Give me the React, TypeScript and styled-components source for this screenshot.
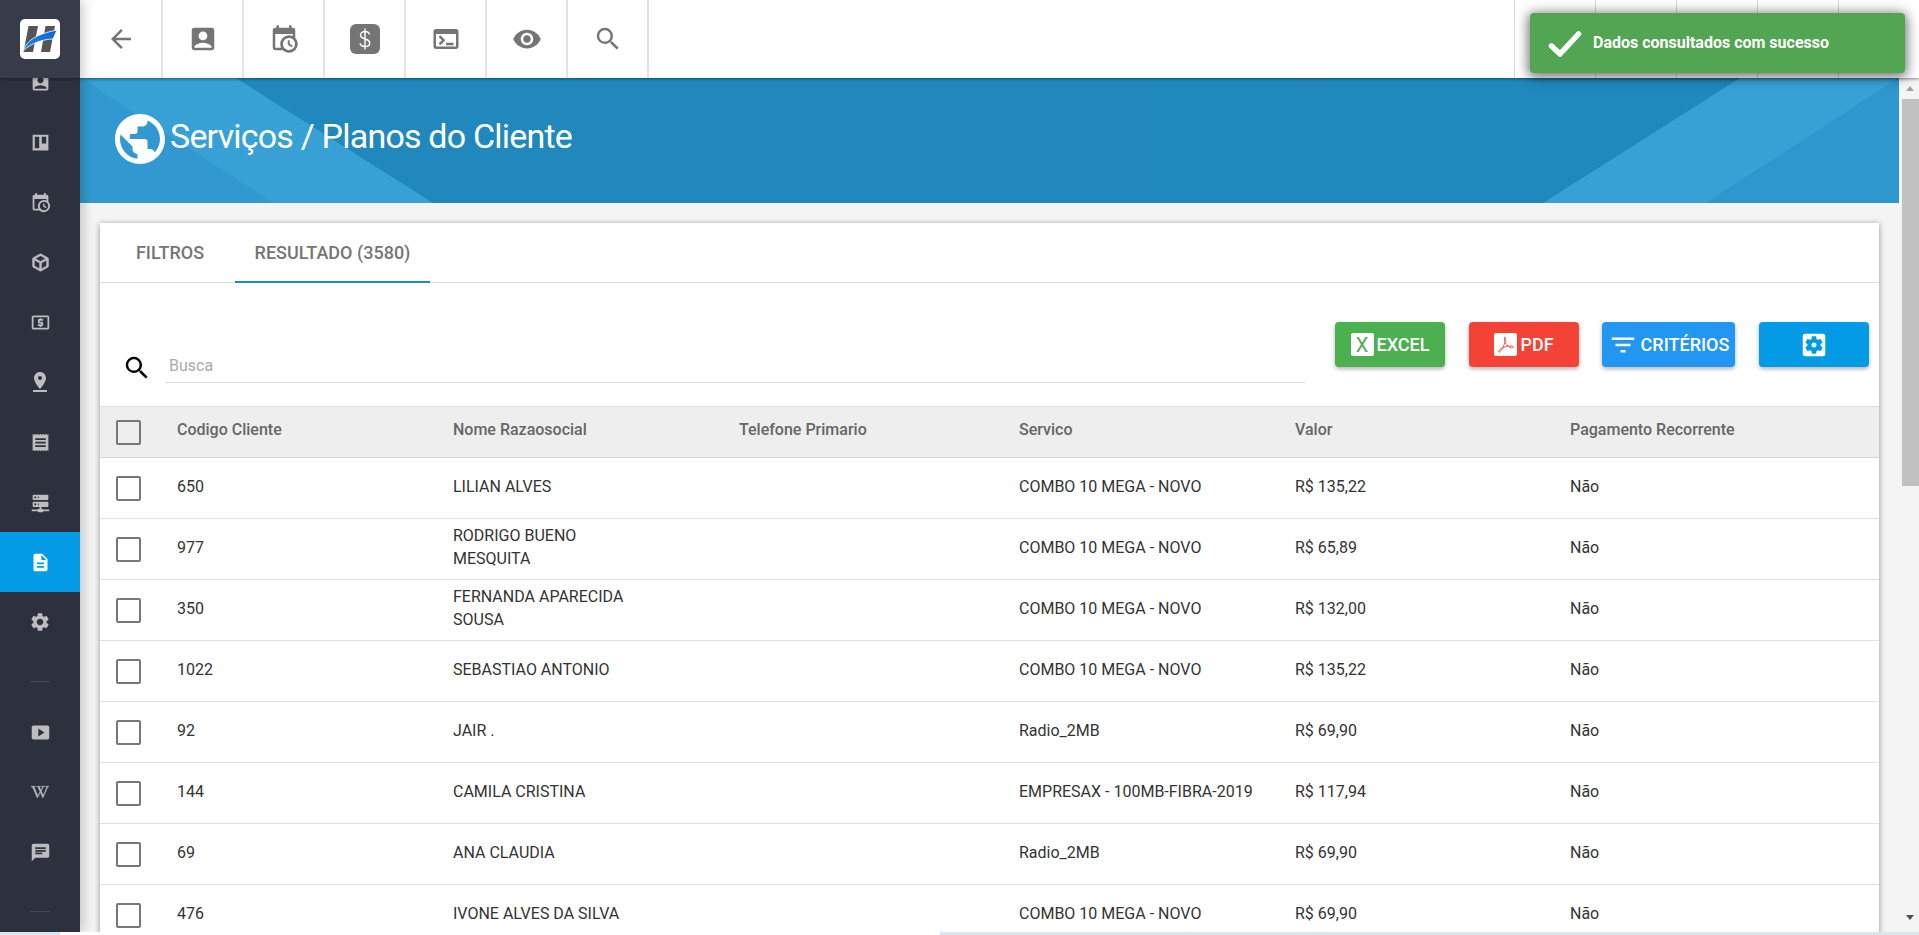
import React from "react";
import styled, { createGlobalStyle } from "styled-components";
import {
  MdAccountBox, MdArrowBack, MdChat, MdDescription, MdFilterList, MdLocalAtm,
  MdPinDrop, MdPublic, MdReceipt, MdSearch, MdSettings, MdSettingsApplications,
  MdSmartDisplay, MdTerminal, MdVisibility,
} from "react-icons/md";
import { FaWikipediaW } from "react-icons/fa";

const Global = createGlobalStyle`
  html, body { margin: 0; padding: 0; height: 100%; overflow: hidden; background: #fff; }
  * { box-sizing: border-box; }
  body { font-family: Roboto, "Liberation Sans", sans-serif; }
`;

const Page = styled.div`
  width: 1919px; height: 935px; display: flex; flex-direction: column; overflow: hidden; position: relative;
`;
const Shell = styled.div`display: flex; height: 932px; overflow: hidden;`;
const BottomStrip = styled.div`
  height: 3px;
  background: linear-gradient(90deg, #d7e7ee 0 60px, #fff 60px 940px, #d7e7ee 940px 100%);
`;

const Sidebar = styled.aside`
  width: 80px; flex: none; background: #2d303d; display: flex; flex-direction: column;
  position: relative; z-index: 3; box-shadow: 4px 0 10px rgba(0,0,0,.18); overflow: hidden;
`;
const LogoBar = styled.div`
  height: 78px; flex: none; background: #383b48; display: flex; align-items: center; justify-content: center;
  position: relative; z-index: 2; box-shadow: 0 1px 3px rgba(0,0,0,.3);
`;
const LogoTile = styled.div`
  width: 40px; height: 40px; background: #fff; border-radius: 5px; display: block; overflow: hidden;
  svg { display: block; }
`;
const Nav = styled.nav`margin-top: -26px; display: flex; flex-direction: column;`;
const NavItem = styled.div<{ $active?: boolean }>`
  height: 60px; flex: none; display: flex; align-items: center; justify-content: center;
  color: ${(p) => (p.$active ? "#fff" : "#bdbdc0")};
  background: ${(p) => (p.$active ? "#039be5" : "transparent")};
`;
const NavDivider = styled.div`
  width: 20px; height: 1px; background: #474a56; margin: 29px auto 20px; flex: none;
`;

const Column = styled.div`flex: 1; min-width: 0; display: flex; flex-direction: column;`;
const TopBar = styled.header`
  height: 78px; flex: none; background: #fff; display: flex; justify-content: space-between;
  position: relative; z-index: 2; box-shadow: 0 1px 3px rgba(0,0,0,.45);
`;
const ToolGroup = styled.div`display: flex;`;
const ToolButton = styled.div`
  width: 81px; height: 78px; display: flex; align-items: center; justify-content: center;
  color: #757575; border-right: 2px solid #e3e3e3;
  &:first-child { width: 83px; }
`;
const RightSlot = styled.div`
  width: 81px; height: 78px; border-left: 1px solid #d8d8d8;
`;

const Body = styled.div`flex: 1; min-height: 0; display: flex;`;
const Main = styled.main`flex: 1; min-width: 0; background: #f4f4f4; overflow: hidden;`;

const Banner = styled.section`
  height: 125px; position: relative; background: linear-gradient(90deg, #2088bd, #1f88bd); color: #fff;
  display: flex; align-items: center; padding: 0 0 4px 30px; overflow: hidden;
`;
const BannerArt = styled.svg`position: absolute; inset: 0; width: 100%; height: 100%;`;
const BannerIcon = styled.span`display: flex; position: relative;`;
const Title = styled.h1`
  margin: 0 0 5px 0; font-size: 34px; font-weight: 400; position: relative; line-height: 40px; letter-spacing: -0.8px;
`;

const Card = styled.section`
  margin: 20px 20px 0; background: #fff; box-shadow: 0 1px 6px rgba(0,0,0,.4);
`;
const Tabs = styled.div`display: flex; height: 60px; border-bottom: 1px solid #ddd;`;
const Tab = styled.div<{ $active?: boolean; $width: number; $inset?: number }>`
  width: ${(p) => p.$width}px; height: 60px; display: flex; align-items: center; justify-content: center;
  padding-left: ${(p) => p.$inset ?? 0}px;
  font-size: 18px; font-weight: 500; color: #757575; text-transform: uppercase; white-space: nowrap;
  border-bottom: 2px solid ${(p) => (p.$active ? "#1e88c8" : "transparent")};
`;

const Toolbar = styled.div`height: 123px; display: flex; padding: 0 10px 0 22px;`;
const SearchGroup = styled.div`
  flex: 1; display: flex; align-items: flex-end; height: 30px; margin: 70px 30px 0 0; gap: 13px;
  color: #000;
`;
const SearchInput = styled.input`
  flex: 1; height: 30px; border: 0; border-bottom: 1px solid #ddd; outline: 0; padding: 0 4px 4px;
  font: 400 16px Roboto, sans-serif; background: transparent;
  &::placeholder { color: #aaa; }
`;
const Actions = styled.div`display: flex; gap: 24px; margin-top: 39px; height: 45px;`;
const ActionButton = styled.div<{ $bg: string; $width: number }>`
  width: ${(p) => p.$width}px; height: 45px; background: ${(p) => p.$bg}; border-radius: 4px; color: #fff;
  display: flex; align-items: center; justify-content: center; gap: 3px;
  font-size: 18px; font-weight: 500; box-shadow: 0 2px 4px rgba(0,0,0,.3);
  &:nth-child(3) { margin-left: -1px; }
`;
const Badge = styled.span<{ $color: string }>`
  width: 23px; height: 23px; background: #fff; border-radius: 2px; color: ${(p) => p.$color};
  display: flex; align-items: center; justify-content: center; font-size: 20px; font-weight: 400;
`;

const gridCols = "77px 276px 286px 280px 276px 275px 1fr";
const HeadRow = styled.div`
  display: grid; grid-template-columns: ${gridCols}; align-items: center; height: 52px;
  background: #eee; border-top: 1px solid #ddd; border-bottom: 1px solid #d4d4d4;
  font-size: 16px; font-weight: 500; color: #666;
`;
const HeadCell = styled.div`padding-bottom: 6px;`;
const Row = styled.div`
  display: grid; grid-template-columns: ${gridCols}; align-items: center; height: 61px;
  border-bottom: 1px solid #e0e0e0; font-size: 16px; color: #333; line-height: 23px;
`;
const Cell = styled.div`padding-bottom: 4px;`;
const CheckCell = styled.div`display: flex; padding-left: 16px;`;
const Check = styled.span`
  width: 25px; height: 25px; border: 2px solid #777; border-radius: 2px; display: block;
`;
const NameCell = styled(Cell)`max-width: 185px;`;

const Scroller = styled.div`
  width: 20px; flex: none; background: #f4f4f4; display: flex; flex-direction: column; align-items: center;
  padding: 8px 0 8px 2px; position: relative;
`;
const ArrowUp = styled.span`
  width: 0; height: 0; border: 4.5px solid transparent; border-top: 0; border-bottom: 5px solid #a3a3a3; flex: none;
`;
const Thumb = styled.span`
  width: 17px; height: 387px; background: #c1c1c1; margin-top: 8px; flex: none;
`;
const ArrowDown = styled.span`
  width: 0; height: 0; border: 4.5px solid transparent; border-bottom: 0; border-top: 5px solid #505050;
  margin-top: auto; margin-bottom: 4px; flex: none;
`;

const Toast = styled.div`
  position: absolute; left: 1530px; top: 13px; width: 375px; height: 60px; background: #52a552; color: #fff;
  border-radius: 4px; display: flex; align-items: center; gap: 11px; padding: 0 0 2px 18px; z-index: 10;
  font-size: 16px; font-weight: 700; box-shadow: 0 2px 12px 2px rgba(0,0,0,.55);
`;
const ToastMark = styled.span`display: flex; margin-top: 4px;`;

const CalendarClock = ({ size }: { size: number }) => (
  <svg width={size} height={size} viewBox="0 0 24 24" fill="currentColor">
    <path d="M15,13H16.5V15.82L18.94,17.23L18.19,18.53L15,16.69V13M19,8H5V19H9.67C9.24,18.09 9,17.07 9,16A7,7 0 0,1 16,9C17.07,9 18.09,9.24 19,9.67V8M5,21C3.89,21 3,20.1 3,19V5C3,3.89 3.89,3 5,3H6V1H8V3H16V1H18V3H19A2,2 0 0,1 21,5V11.1C22.24,12.36 23,14.09 23,16A7,7 0 0,1 16,23C14.09,23 12.36,22.24 11.1,21H5M16,11.15A4.85,4.85 0 0,0 11.15,16C11.15,18.68 13.32,20.85 16,20.85A4.85,4.85 0 0,0 20.85,16C20.85,13.32 18.68,11.15 16,11.15Z" />
  </svg>
);
const Trello = ({ size }: { size: number }) => (
  <svg width={size} height={size} viewBox="0 0 24 24" fill="currentColor">
    <path fillRule="evenodd" d="M3 3H21V21H3ZM5.500 5.500V18.500H10.500V5.500ZM13.500 5.500V13H18.500V5.500Z" />
  </svg>
);
const Cube = ({ size }: { size: number }) => (
  <svg width={size} height={size} viewBox="0 0 24 24" fill="currentColor" stroke="currentColor" strokeWidth=".7">
    <path d="M21,16.5C21,16.88 20.79,17.21 20.47,17.38L12.57,21.82C12.41,21.94 12.21,22 12,22C11.79,22 11.59,21.94 11.43,21.82L3.53,17.38C3.21,17.21 3,16.88 3,16.5V7.5C3,7.12 3.21,6.79 3.53,6.62L11.43,2.18C11.59,2.06 11.79,2 12,2C12.21,2 12.41,2.06 12.57,2.18L20.47,6.62C20.79,6.79 21,7.12 21,7.5V16.5M12,4.15L6.04,7.5L12,10.85L17.96,7.5L12,4.15M5,15.91L11,19.29V12.58L5,9.21V15.91M19,15.91V9.21L13,12.58V19.29L19,15.91Z" />
  </svg>
);
const ServerNet = ({ size }: { size: number }) => (
  <svg width={size} height={size} viewBox="0 0 24 24" fill="currentColor">
    <path d="M13,19H14A1,1 0 0,1 15,20H22V22H15A1,1 0 0,1 14,23H10A1,1 0 0,1 9,22H2V20H9A1,1 0 0,1 10,19H11V17H4A1,1 0 0,1 3,16V12A1,1 0 0,1 4,11H20A1,1 0 0,1 21,12V16A1,1 0 0,1 20,17H13V19M4,3H20A1,1 0 0,1 21,4V8A1,1 0 0,1 20,9H4A1,1 0 0,1 3,8V4A1,1 0 0,1 4,3M9,7H10V5H9V7M9,15H10V13H9V15M5,5V7H7V5H5M5,13V15H7V13H5Z" />
  </svg>
);
const DollarTile = () => (
  <svg width="30" height="30" viewBox="0 0 30 30">
    <rect width="30" height="30" rx="6" fill="#757575" />
    <path d="M19.500 10.500c-.4-2-2.200-3-4.500-3-2.600 0-4.500 1.400-4.500 3.600 0 2.400 2 3.200 4.500 3.900 2.600.7 4.700 1.500 4.700 4 0 2.300-2 3.600-4.700 3.600-2.600 0-4.600-1.200-4.900-3.400M15 4.500v21" fill="none" stroke="#fff" strokeWidth="1.4" />
  </svg>
);
const Logo = () => (
  <svg width="40" height="40" viewBox="0 0 40 40">
    <defs>
      <linearGradient id="sw" x1="0" y1="1" x2="1" y2="0">
        <stop offset="0" stopColor="#1f8be0" />
        <stop offset="1" stopColor="#0a62e0" />
      </linearGradient>
    </defs>
    <path d="M8.500 7H18L13 33H3.500Z M25.500 7H35L30 33H21Z" fill="#555" />
    <path d="M3 32C7 21 17 15 37 11C35 15 34 18 33 20C24 20 11 24 3 32Z" fill="url(#sw)" stroke="#fff" strokeWidth=".8" />
  </svg>
);
const PdfGlyph = () => (
  <svg width="19" height="19" viewBox="0 0 19 19" fill="none" stroke="#ef5350" strokeWidth="1">
    <path d="M9 2c-.6 0-.8 1-.4 3 .6 3 3 6.500 5.400 7.500 1.800.7 3.300.4 3.300-.5 0-1-2.200-1.200-5.300-.8-3.500.5-6.500 1.700-8.500 3.800-1 1.100-1 2.200-.3 2.200 1.200 0 3.500-3.600 5-7.700C9.500 6 9.800 2 9 2Z" />
  </svg>
);
const CheckMark = () => (
  <svg width="34" height="28" viewBox="0 0 34 28" fill="none" stroke="#fff" strokeWidth="5.500" strokeLinecap="round" strokeLinejoin="round">
    <path d="M3.500 16L12 24L30.500 4" />
  </svg>
);

const rows = [
  ["650", "LILIAN ALVES", "COMBO 10 MEGA - NOVO", "R$ 135,22"],
  ["977", "RODRIGO BUENO MESQUITA", "COMBO 10 MEGA - NOVO", "R$ 65,89"],
  ["350", "FERNANDA APARECIDA SOUSA", "COMBO 10 MEGA - NOVO", "R$ 132,00"],
  ["1022", "SEBASTIAO ANTONIO", "COMBO 10 MEGA - NOVO", "R$ 135,22"],
  ["92", "JAIR .", "Radio_2MB", "R$ 69,90"],
  ["144", "CAMILA CRISTINA", "EMPRESAX - 100MB-FIBRA-2019", "R$ 117,94"],
  ["69", "ANA CLAUDIA", "Radio_2MB", "R$ 69,90"],
  ["476", "IVONE ALVES DA SILVA", "COMBO 10 MEGA - NOVO", "R$ 69,90"],
];

export default function App() {
  return (
    <Page>
      <Global />
      <Shell>
        <Sidebar>
          <LogoBar>
            <LogoTile><Logo /></LogoTile>
          </LogoBar>
          <Nav>
            <NavItem><MdAccountBox size={21} /></NavItem>
            <NavItem><Trello size={21} /></NavItem>
            <NavItem><CalendarClock size={21} /></NavItem>
            <NavItem><Cube size={21} /></NavItem>
            <NavItem><MdLocalAtm size={21} /></NavItem>
            <NavItem><MdPinDrop size={24} /></NavItem>
            <NavItem><MdReceipt size={21} /></NavItem>
            <NavItem><ServerNet size={21} /></NavItem>
            <NavItem $active><MdDescription size={21} /></NavItem>
            <NavItem><MdSettings size={22} /></NavItem>
            <NavDivider />
            <NavItem><MdSmartDisplay size={21} /></NavItem>
            <NavItem><FaWikipediaW size={18} stroke="currentColor" strokeWidth={14} /></NavItem>
            <NavItem><MdChat size={21} /></NavItem>
            <NavDivider />
          </Nav>
        </Sidebar>
        <Column>
          <TopBar>
            <ToolGroup>
              <ToolButton><MdArrowBack size={30} /></ToolButton>
              <ToolButton><MdAccountBox size={30} /></ToolButton>
              <ToolButton><CalendarClock size={30} /></ToolButton>
              <ToolButton><DollarTile /></ToolButton>
              <ToolButton><MdTerminal size={30} /></ToolButton>
              <ToolButton><MdVisibility size={30} /></ToolButton>
              <ToolButton><MdSearch size={30} /></ToolButton>
            </ToolGroup>
            <ToolGroup>
              <RightSlot /><RightSlot /><RightSlot /><RightSlot /><RightSlot />
            </ToolGroup>
          </TopBar>
          <Body>
            <Main>
              <Banner>
                <BannerArt viewBox="0 0 1819 125" preserveAspectRatio="none">
                  <polygon points="0,0 193,125 0,125" fill="#3299d0" />
                  <polygon points="0,0 156,0 353,125 193,125" fill="#37a0d5" />
                  <polygon points="1463,125 1660,0 1819,0 1627,125" fill="#37a0d5" />
                  <polygon points="1819,0 1819,125 1627,125" fill="#2e97cd" />
                </BannerArt>
                <BannerIcon><MdPublic size={60} /></BannerIcon>
                <Title>Serviços / Planos do Cliente</Title>
              </Banner>
              <Card>
                <Tabs>
                  <Tab $width={135} $inset={5}>Filtros</Tab>
                  <Tab $width={195} $active>Resultado (3580)</Tab>
                </Tabs>
                <Toolbar>
                  <SearchGroup>
                    <MdSearch size={30} />
                    <SearchInput placeholder="Busca" readOnly />
                  </SearchGroup>
                  <Actions>
                    <ActionButton $bg="#4caf50" $width={110}><Badge $color="#5aa85a">X</Badge>EXCEL</ActionButton>
                    <ActionButton $bg="#f44336" $width={110}><Badge $color="#ef5350"><PdfGlyph /></Badge>PDF</ActionButton>
                    <ActionButton $bg="#2196f3" $width={133}><MdFilterList size={30} />CRITÉRIOS</ActionButton>
                    <ActionButton $bg="#039be5" $width={110}><MdSettingsApplications size={30} /></ActionButton>
                  </Actions>
                </Toolbar>
                <HeadRow>
                  <CheckCell><Check /></CheckCell>
                  <HeadCell>Codigo Cliente</HeadCell>
                  <HeadCell>Nome Razaosocial</HeadCell>
                  <HeadCell>Telefone Primario</HeadCell>
                  <HeadCell>Servico</HeadCell>
                  <HeadCell>Valor</HeadCell>
                  <HeadCell>Pagamento Recorrente</HeadCell>
                </HeadRow>
                {rows.map((r) => (
                  <Row key={r[0]}>
                    <CheckCell><Check /></CheckCell>
                    <Cell>{r[0]}</Cell>
                    <NameCell>{r[1]}</NameCell>
                    <Cell />
                    <Cell>{r[2]}</Cell>
                    <Cell>{r[3]}</Cell>
                    <Cell>Não</Cell>
                  </Row>
                ))}
              </Card>
            </Main>
            <Scroller>
              <ArrowUp />
              <Thumb />
              <ArrowDown />
            </Scroller>
          </Body>
        </Column>
      </Shell>
      <BottomStrip />
      <Toast><ToastMark><CheckMark /></ToastMark>Dados consultados com sucesso</Toast>
    </Page>
  );
}
